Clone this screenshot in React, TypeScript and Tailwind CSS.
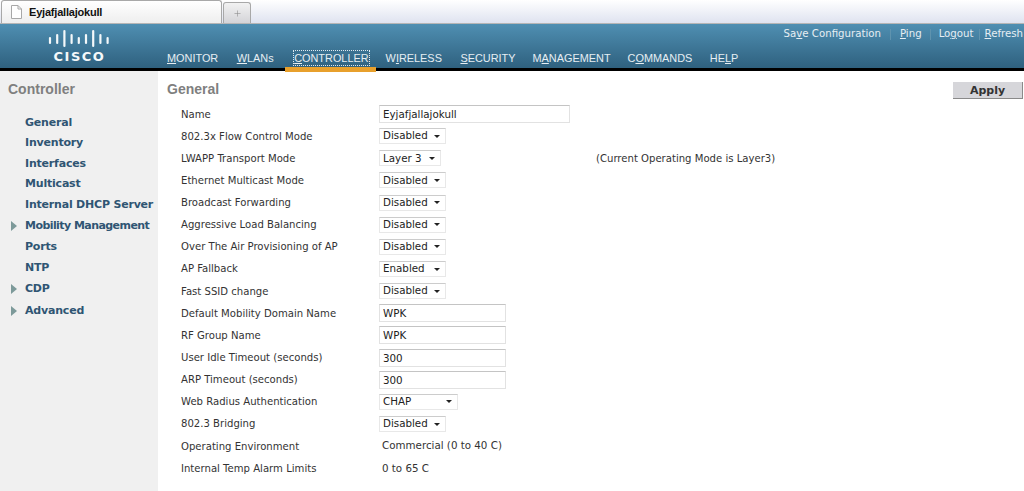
import React from 'react';
import { Plus } from 'lucide-react';

const navItems = [
  { pre: '', key: 'M', post: 'ONITOR', ml: 'ml-0' },
  { pre: '', key: 'W', post: 'LANs', ml: 'ml-[18.5px]' },
  { pre: '', key: 'C', post: 'ONTROLLER', active: true, ml: 'ml-[20.5px]' },
  { pre: 'W', key: 'I', post: 'RELESS', ml: 'ml-[17px]' },
  { pre: '', key: 'S', post: 'ECURITY', ml: 'ml-[18.5px]' },
  { pre: 'M', key: 'A', post: 'NAGEMENT', ml: 'ml-[17px]' },
  { pre: 'C', key: 'O', post: 'MMANDS', ml: 'ml-[17px]' },
  { pre: 'HE', key: 'L', post: 'P', ml: 'ml-[17.5px]' },
];

const sideItems = [
  { label: 'General', h: 'h-[20.5px]' },
  { label: 'Inventory', h: 'h-[20.5px]' },
  { label: 'Interfaces', h: 'h-[20.5px]' },
  { label: 'Multicast', h: 'h-[20.5px]' },
  { label: 'Internal DHCP Server', h: 'h-[20.5px]' },
  { label: 'Mobility Management', h: 'h-[22px]', arrow: true, tight: true },
  { label: 'Ports', h: 'h-[20.5px]' },
  { label: 'NTP', h: 'h-[20.5px]' },
  { label: 'CDP', h: 'h-[22px]', arrow: true },
  { label: 'Advanced', h: 'h-[22px]', arrow: true },
];

type Row = {
  label: string;
  kind: 'input' | 'select' | 'text';
  value: string;
  w?: string;
  note?: string;
};

const rows: Row[] = [
  { label: 'Name', kind: 'input', value: 'Eyjafjallajokull', w: 'w-[191px]' },
  { label: '802.3x Flow Control Mode', kind: 'select', value: 'Disabled', w: 'w-[67px]' },
  { label: 'LWAPP Transport Mode', kind: 'select', value: 'Layer 3', w: 'w-[62px]', note: '(Current Operating Mode is Layer3)' },
  { label: 'Ethernet Multicast Mode', kind: 'select', value: 'Disabled', w: 'w-[67px]' },
  { label: 'Broadcast Forwarding', kind: 'select', value: 'Disabled', w: 'w-[67px]' },
  { label: 'Aggressive Load Balancing', kind: 'select', value: 'Disabled', w: 'w-[67px]' },
  { label: 'Over The Air Provisioning of AP', kind: 'select', value: 'Disabled', w: 'w-[67px]' },
  { label: 'AP Fallback', kind: 'select', value: 'Enabled', w: 'w-[67px]' },
  { label: 'Fast SSID change', kind: 'select', value: 'Disabled', w: 'w-[67px]' },
  { label: 'Default Mobility Domain Name', kind: 'input', value: 'WPK', w: 'w-[127px]' },
  { label: 'RF Group Name', kind: 'input', value: 'WPK', w: 'w-[127px]' },
  { label: 'User Idle Timeout (seconds)', kind: 'input', value: '300', w: 'w-[127px]' },
  { label: 'ARP Timeout (seconds)', kind: 'input', value: '300', w: 'w-[127px]' },
  { label: 'Web Radius Authentication', kind: 'select', value: 'CHAP', w: 'w-[79px]' },
  { label: '802.3 Bridging', kind: 'select', value: 'Disabled', w: 'w-[67px]' },
  { label: 'Operating Environment', kind: 'text', value: 'Commercial (0 to 40 C)' },
  { label: 'Internal Temp Alarm Limits', kind: 'text', value: '0 to 65 C' },
];

const verdana = "font-['DejaVu_Sans',sans-serif]";

const logoBars = [
  { x: 2, y1: 9, y2: 14 },
  { x: 9.2, y1: 6, y2: 14 },
  { x: 16.4, y1: 2, y2: 17 },
  { x: 23.6, y1: 6, y2: 14 },
  { x: 30.8, y1: 9, y2: 14 },
  { x: 38, y1: 6, y2: 14 },
  { x: 45.2, y1: 2, y2: 17 },
  { x: 52.4, y1: 6, y2: 14 },
  { x: 59.6, y1: 9, y2: 14 },
];

const CiscoLogo = () => (
  <div className="flex flex-col items-center w-[62px]">
    <svg width="62" height="19" viewBox="0 0 62 19" stroke="#f4f8fa" strokeWidth="2.2" strokeLinecap="round">
      {logoBars.map((bar) => (
        <line key={bar.x} x1={bar.x} y1={bar.y1} x2={bar.x} y2={bar.y2} />
      ))}
    </svg>
    <span className={`${verdana} font-bold text-[13px] leading-[14px] tracking-[1.5px] text-[#f4f8fa] mt-[2px] ml-[1px]`}>
      CISCO
    </span>
  </div>
);

const App: React.FC = () => {
  return (
    <div className="w-[1024px] h-[491px] overflow-hidden bg-white flex flex-col">
      {/* browser tab strip */}
      <div className="h-[24px] flex items-end bg-gradient-to-b from-white to-[#dfe3f0] border-b border-[#b5b5b5] pl-[1px]">
        <div className="w-[221px] h-[23px] flex items-center gap-[7px] pl-[9px] bg-gradient-to-b from-white to-[#eeeeee] border border-b-0 border-[#a8a8a8] rounded-t-[3px]">
          <svg width="11" height="14" viewBox="0 0 11 14" fill="#ffffff" stroke="#a8a8a8">
            <path d="M.5.5h6.5l3.5 3.5v9.5H.5z" />
            <path d="M7 .5v3.5h3.5" fill="none" />
          </svg>
          <span className="font-['Liberation_Sans',sans-serif] font-bold text-[11px] tracking-[-0.2px] text-[#111111]">Eyjafjallajokull</span>
        </div>
        <div className="w-[28px] h-[21px] ml-[1px] flex items-center justify-center bg-gradient-to-b from-[#f2f2f2] to-[#d4d4d8] border border-b-0 border-[#a8a8a8] rounded-t-[3px]">
          <Plus size={9} color="#8a8a8a" strokeWidth={1.5} />
        </div>
      </div>

      {/* cisco header */}
      <div className="h-[44px] flex bg-gradient-to-b from-[#4f8fb2] to-[#2f617f] pl-[48px]">
        <div className="pt-[5px]">
          <CiscoLogo />
        </div>
        <nav className="flex items-end ml-[57px] pb-[3px] text-[10.9px] leading-[14px] text-[#e6eef3] font-['Liberation_Sans',sans-serif] whitespace-nowrap">
          {navItems.map((item) => (
            <span key={item.pre + item.key + item.post} className={`${item.ml} ${item.active ? 'outline-1 outline-dotted outline-[#dfe8ee]' : ''}`}>
              {item.pre}
              <u>{item.key}</u>
              {item.post}
            </span>
          ))}
        </nav>
        <div className={`ml-auto pt-[3px] pr-[1px] flex items-start whitespace-nowrap text-[10.2px] leading-[14px] text-[#e6eef3] ${verdana}`}>
          <span>Sa<u>v</u>e Configuration</span>
          <span className="w-px h-[11px] mt-[2px] bg-[#5f93ae] mx-[9px]" />
          <span><u>P</u>ing</span>
          <span className="w-px h-[11px] mt-[2px] bg-[#5f93ae] mx-[8px]" />
          <span>Lo<u>g</u>out</span>
          <span className="w-px h-[11px] mt-[2px] bg-[#5f93ae] mx-[5px]" />
          <span><u>R</u>efresh</span>
        </div>
      </div>
      <div className="h-[3px] bg-black relative">
        <div className="absolute left-[285px] top-[-1px] w-[91px] h-[5px] bg-[#e8a02c]" />
      </div>

      <div className="flex flex-1 min-h-0">
        {/* sidebar */}
        <aside className="w-[158px] bg-[#f0f0f0] pl-[8px] pt-[10px]">
          <div className="font-['Liberation_Sans',sans-serif] font-bold text-[14px] leading-[17px] text-[#7f7f7f]">Controller</div>
          <div className="mt-[14.5px]">
            {sideItems.map((item) => (
              <div
                key={item.label}
                className={`flex items-center ${item.h} relative pl-[17px] ${verdana} font-bold text-[11px] text-[#2f5573] ${item.tight ? 'tracking-[-0.56px]' : 'tracking-[-0.2px]'}`}
              >
                {item.arrow && (
                  <span className="absolute left-[3px] top-1/2 -translate-y-1/2 w-0 h-0 border-y-[5px] border-y-transparent border-l-[6px] border-l-[#7d9a9a]" />
                )}
                {item.label}
              </div>
            ))}
          </div>
        </aside>

        {/* main form */}
        <main className="flex-1 pl-[9px] pt-[9px]">
          <div className="flex items-start justify-between h-[22px]">
            <h1 className="font-['Liberation_Sans',sans-serif] font-bold text-[14px] leading-[18px] text-[#7f7f7f]">General</h1>
            <button className={`w-[70px] h-[17px] mt-[2px] mr-[1px] bg-[#d6d6da] border-r border-b border-[#8a8a8a] ${verdana} font-bold text-[11px] leading-[15px] text-[#333333]`}>
              Apply
            </button>
          </div>
          <div className="pl-[14px] pt-[1px]">
            {rows.map((row) => (
              <div key={row.label} className={`flex items-center h-[22.15px] ${verdana} text-[10.3px] text-[#333333]`}>
                <span className="w-[198px] shrink-0 text-[10.1px]">{row.label}</span>
                <div className="w-[217px] shrink-0 flex items-center">
                  {row.kind === 'input' && (
                    <input
                      readOnly
                      value={row.value}
                      className={`${row.w} h-[18px] px-[3px] bg-white border border-[#e2e2e2] border-t-[#c4c4c4] outline-none text-[#222222]`}
                    />
                  )}
                  {row.kind === 'select' && (
                    <div className={`${row.w} h-[16px] pl-[3px] pr-[5px] flex items-center justify-between bg-white border border-[#e8e8e8] border-t-[#cccccc] text-[#222222]`}>
                      <span>{row.value}</span>
                      <span className="w-0 h-0 border-x-[3px] border-x-transparent border-t-[3px] border-t-[#222222]" />
                    </div>
                  )}
                  {row.kind === 'text' && <span className="pl-[3px] whitespace-nowrap">{row.value}</span>}
                </div>
                {row.note && <span className="text-[10.1px]">{row.note}</span>}
              </div>
            ))}
          </div>
        </main>
      </div>
    </div>
  );
};

export default App;
